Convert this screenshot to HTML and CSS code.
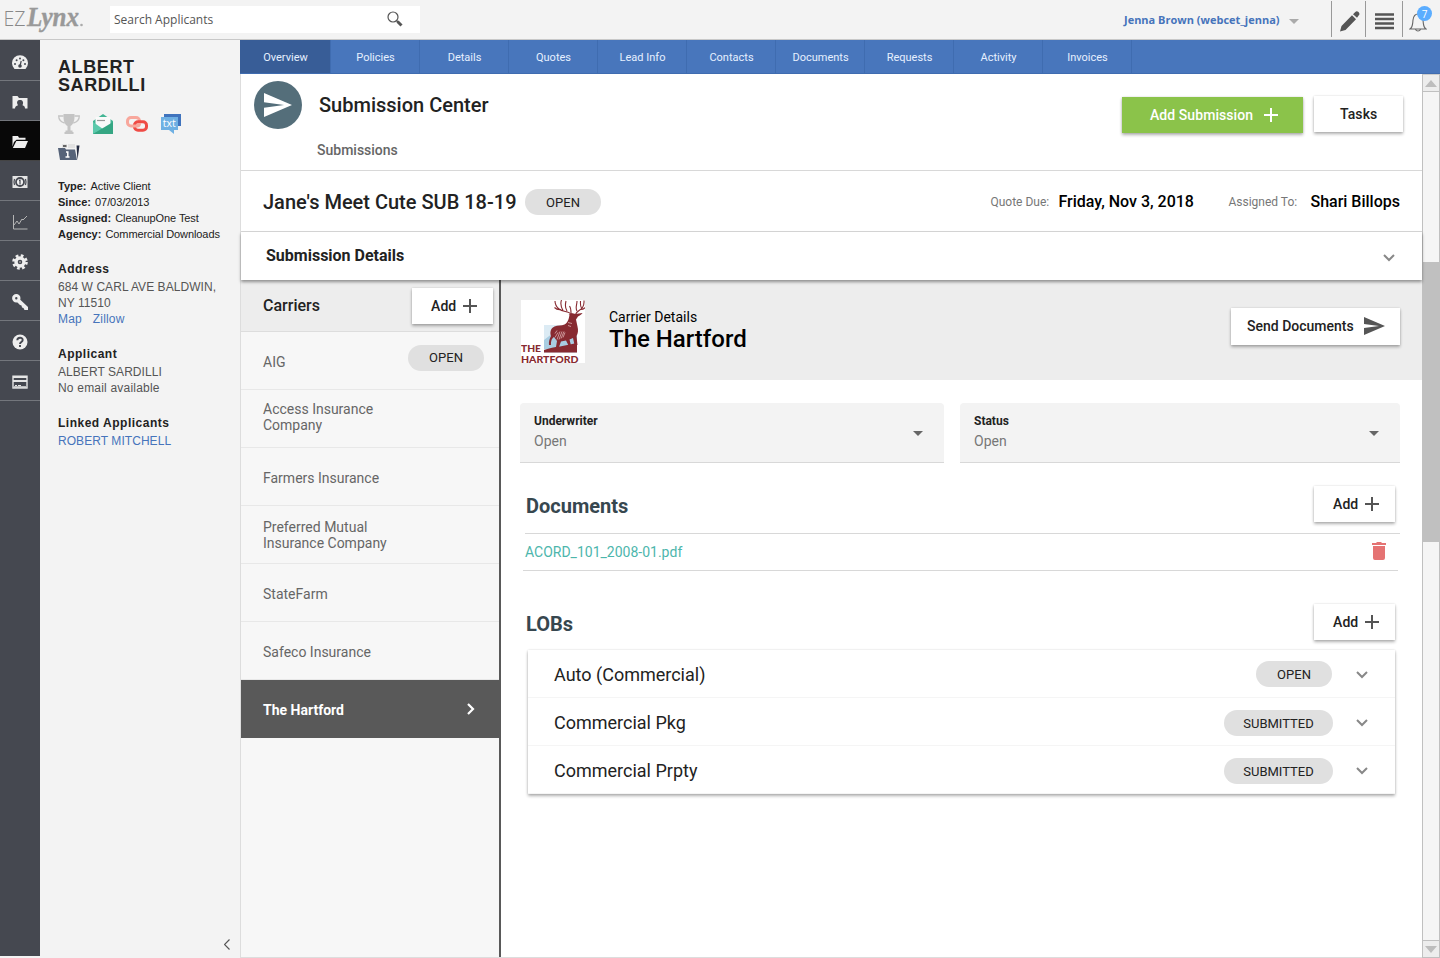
FILE: index.html
```html
<!DOCTYPE html>
<html lang="en">
<head>
<meta charset="utf-8">
<title>EZLynx - Submission Center</title>
<link rel="stylesheet" href="styles.css">
</head>
<body>
<svg class="defs" width="0" height="0">
  <symbol id="plus" viewBox="0 0 14 14"><path d="M7 0v14M0 7h14" stroke="currentColor" stroke-width="2" fill="none"/></symbol>
  <symbol id="down" viewBox="0 0 12 8"><path d="M1 1l5 5 5-5" stroke="currentColor" stroke-width="2" fill="none"/></symbol>
  <symbol id="send" viewBox="0 0 21 18"><path d="M0 0l21 9-21 9v-7l15-2-15-2z" fill="currentColor"/></symbol>
</svg>
<header class="topbar">
  <svg class="logo" width="84" height="39" viewBox="0 0 84 39">
    <text x="3.500" y="26" class="logo-ez" textLength="22" lengthAdjust="spacingAndGlyphs">EZ</text>
    <text x="27" y="26" class="logo-lynx" textLength="52" lengthAdjust="spacingAndGlyphs">Lynx</text>
    <circle cx="81.500" cy="25" r="1.300" fill="#aaa"/>
  </svg>
  <div class="search"><span>Search Applicants</span>
    <svg width="16" height="16" viewBox="0 0 16 16"><circle cx="6" cy="6" r="5" fill="none" stroke="#555" stroke-width="1.200"/><path d="M9.500 9.500l1.500 1.500" stroke="#555" stroke-width="1.500"/><path d="M10.500 10.500l4 4" stroke="#555" stroke-width="3"/></svg>
  </div>
  <div class="user">Jenna Brown (webcet_jenna)</div>
  <svg class="caret" width="10" height="5"><path d="M0 0h10l-5 5z" fill="#aaa"/></svg>
  <div class="tools">
    <div class="tool tool-edit"><svg width="20" height="21" viewBox="0 0 20 21"><path d="M0 20.500l1.500-5.500L12 4.200l4 4L5.500 19z M13 3.200l2.300-2.300c1-1 2-1 3.200.2s1.200 2.200.3 3.200L17 6.800z" fill="#555"/></svg></div>
    <div class="tool tool-menu"><svg width="19" height="17"><path d="M0 1.500h19M0 6h19M0 10.500h19M0 15h19" stroke="#555" stroke-width="2.500"/></svg></div>
    <div class="tool tool-bell"><svg width="18" height="21" viewBox="0 0 18 21"><path d="M1 18c3-2 2.500-5 3-9 .5-4 2.500-6 5-6s4.500 2 5 6c.5 4 0 7 3 9zM6.500 18.500c1 2 4 2 5 0" fill="none" stroke="#666" stroke-width="1.100"/></svg><span class="badge">7</span></div>
  </div>
</header>
<div class="body">
  <nav class="rail">
    <div class="rail-item"><svg width="16" height="16" viewBox="0 0 16 16"><path d="M2.500 14A8 8 0 1 1 13.500 14z" fill="#eee"/><g fill="#454850"><circle cx="3" cy="9" r="1"/><circle cx="4.600" cy="5.200" r="1"/><circle cx="8" cy="3.400" r="1"/><circle cx="11.400" cy="5.200" r="1"/><circle cx="13" cy="9" r="1"/><circle cx="8" cy="11" r="1.800"/></g><path d="M8 11l1.200-5" stroke="#454850" stroke-width="1.200"/></svg></div>
    <div class="rail-item"><svg width="16" height="16" viewBox="0 0 16 16"><path d="M.5 2h5l1.500 2h8.500v10.500h-2.500c0-2-1-2.600-2.500-3.200C12 8 10.500 6 8 6S4 8 6 11.300C4.500 12 3 12.500 3 14.500H.5z" fill="#eee"/></svg></div>
    <div class="rail-item active"><svg width="16" height="16" viewBox="0 0 16 16"><path d="M.5 12.500V2h5.500l1 1.800H13.500v2H4.500L2 8z" fill="#eee"/><path d="M.8 14l3.500-7H16l-3 7z" fill="#eee"/></svg></div>
    <div class="rail-item"><svg width="16" height="16" viewBox="0 0 16 16"><path d="M.5 2h15v12H.5z" fill="#e5e5e5"/><circle cx="8" cy="8" r="4" fill="#eee" stroke="#454850" stroke-width="1.800"/><path d="M2.500 5q-1 3 0 6M13.500 5q1 3 0 6M8 5.500v5M7 6.500h1" stroke="#454850" stroke-width="1.200" fill="none"/></svg></div>
    <div class="rail-item"><svg width="16" height="16" viewBox="0 0 16 16"><path d="M1.500 1v14H15.500M2 11l3-4 2 3 3-5 1 1 4-4" fill="none" stroke="#b5b5b5"/></svg></div>
    <div class="rail-item"><svg width="16" height="16" viewBox="0 0 16 16"><circle cx="8" cy="8" r="4" fill="none" stroke="#eee" stroke-width="3.400"/><circle cx="8" cy="8" r="6.500" fill="none" stroke="#eee" stroke-width="2.600" stroke-dasharray="2.700 2.405"/><circle cx="8" cy="8" r="1" fill="#999"/></svg></div>
    <div class="rail-item"><svg width="16" height="16" viewBox="0 0 16 16"><circle cx="4.300" cy="4.300" r="2.700" fill="none" stroke="#eee" stroke-width="3"/><path d="M7.500 5l8.500 8v3h-3.500l-1-2-1.500-.5-.5-2-1.500-.5L5 8z" fill="#eee"/></svg></div>
    <div class="rail-item"><svg width="16" height="16" viewBox="0 0 16 16"><circle cx="8" cy="8" r="7.500" fill="#eee"/><path d="M5.300 6.300C5.300 3 10.700 3 10.700 6c0 2-2.700 2-2.700 4M8 11v2" fill="none" stroke="#454850" stroke-width="1.900"/></svg></div>
    <div class="rail-item"><svg width="16" height="16" viewBox="0 0 16 16"><rect x="1" y="2.200" width="14" height="11.800" fill="#454850" stroke="#e5e5e5" stroke-width="1.400"/><path d="M1 3h14M1 7h14" stroke="#e5e5e5" stroke-width="2.200"/><path d="M2 13h12" stroke="#e5e5e5" stroke-width="1.500"/><path d="M3 11.500h2M6 11.500h3" stroke="#e5e5e5"/></svg></div>
  </nav>
  <aside class="client">
    <h1>ALBERT<br>SARDILLI</h1>
    <div class="client-icons">
      <svg width="22" height="20" viewBox="0 0 22 20"><path d="M5.500 0h11v3c0 5-2 8-4 9v4.500h2V18h1v2h-9v-2h1v-1.500h2V12c-2-1-4-4-4-9z" fill="#c4c4c4"/><path d="M5.500 2H.7c0 4 2 6 6 7M16.500 2h4.800c0 4-2 6-6 7" fill="none" stroke="#c4c4c4" stroke-width="1.300"/></svg>
      <svg width="20" height="20" viewBox="0 0 20 20"><path d="M0 7l10-7 10 7v13H0z" fill="#43b594"/><path d="M2.500 3h15v8l-7.500 5-7.500-5z" fill="#fafafa"/><path d="M4 6.500h8" stroke="#999" stroke-width="1.200"/><path d="M0 8l10 7L0 20z" fill="#5cc9ab"/><path d="M20 8v12H0z" fill="#35a683"/></svg>
      <svg width="22" height="16" viewBox="0 0 22 16"><rect x="1.500" y="1.500" width="12" height="8.500" rx="3.500" fill="none" stroke="#f8a79c" stroke-width="3"/><rect x="8.500" y="5.800" width="12" height="8.500" rx="3.500" fill="none" stroke="#ef4b45" stroke-width="3"/><path d="M7 10h4q2.500 0 2.500-3" fill="none" stroke="#f8a79c" stroke-width="3"/></svg>
      <svg width="20" height="20" viewBox="0 0 20 20"><path d="M3 0h17v12H3z" fill="#3f73bd"/><path d="M0 3h17v13h-4v4l-5-4H0z" fill="#6eb0e3"/><text x="1.800" y="12.500" class="txt" textLength="13" lengthAdjust="spacingAndGlyphs">txt</text></svg>
      <svg width="22" height="16" viewBox="0 0 22 16"><path d="M4 0h5v4H4zM10 0h7v4h-7z" fill="#e2e2e2"/><path d="M5 1h3.500v2H5z" fill="#666"/><path d="M0 4h7l1 1.500h9L19 16H2z" fill="#566379"/><path d="M18.500 1.500h3L19.500 16z" fill="#252c42"/><path d="M8 8h1.800v5M7.500 13h4" stroke="#fff" stroke-width="1.500" fill="none"/></svg>
    </div>
    <div class="facts">
      <p><b>Type:</b> <span>Active Client</span></p>
      <p><b>Since:</b> <span>07/03/2013</span></p>
      <p><b>Assigned:</b> <span>CleanupOne Test</span></p>
      <p><b>Agency:</b> <span>Commercial Downloads</span></p>
    </div>
    <section><h2>Address</h2><p>684 W CARL AVE BALDWIN,</p><p>NY 11510</p><p class="links"><a>Map</a><a>Zillow</a></p></section>
    <section><h2>Applicant</h2><p>ALBERT SARDILLI</p><p class="loose">No email available</p></section>
    <section><h2>Linked Applicants</h2><p><a>ROBERT MITCHELL</a></p></section>
    <svg class="collapse" width="6" height="11"><path d="M5.500 .5l-5 5 5 5" fill="none" stroke="#555" stroke-width="1.200"/></svg>
  </aside>
  <main class="main">
    <nav class="tabs">
      <div class="tab on">Overview</div><div class="tab">Policies</div><div class="tab">Details</div><div class="tab">Quotes</div><div class="tab">Lead Info</div><div class="tab">Contacts</div><div class="tab">Documents</div><div class="tab">Requests</div><div class="tab">Activity</div><div class="tab">Invoices</div>
    </nav>
    <div class="frame">
      <div class="page">
        <div class="page-head">
          <div class="disc"><svg width="28" height="24"><use href="#send"/></svg></div>
          <div class="titles"><div class="title">Submission Center</div><div class="subtitle">Submissions</div></div>
          <div class="btn btn-green"><span>Add Submission</span><svg width="14" height="14"><use href="#plus"/></svg></div>
          <div class="btn btn-tasks">Tasks</div>
        </div>
        <div class="sub-head">
          <div class="sub-name">Jane's Meet Cute SUB 18-19</div><div class="pill">OPEN</div>
          <div class="meta due">Quote Due:</div><div class="val">Friday, Nov 3, 2018</div>
          <div class="meta assigned">Assigned To:</div><div class="val val-name">Shari Billops</div>
        </div>
        <div class="details-bar"><span>Submission Details</span><svg width="12" height="8"><use href="#down"/></svg></div>
        <div class="cols">
          <div class="carriers">
            <div class="carriers-head"><span>Carriers</span><div class="btn btn-add"><span>Add</span><svg width="14" height="14"><use href="#plus"/></svg></div></div>
            <div class="carrier"><span class="aig">AIG</span><div class="pill">OPEN</div></div>
            <div class="carrier two"><span>Access Insurance<br>Company</span></div>
            <div class="carrier"><span>Farmers Insurance</span></div>
            <div class="carrier two"><span>Preferred Mutual<br>Insurance Company</span></div>
            <div class="carrier"><span>StateFarm</span></div>
            <div class="carrier"><span>Safeco Insurance</span></div>
            <div class="carrier picked"><span>The Hartford</span><svg width="8" height="12"><path d="M1 1l5 5-5 5" fill="none" stroke="#fff" stroke-width="2.200"/></svg></div>
          </div>
          <div class="detail">
            <div class="detail-head">
              <svg class="hartford" width="64" height="63" viewBox="0 0 64 63">
                <rect width="64" height="63" fill="#fff"/>
                <path d="M23 25h33v28H23z" fill="#dcebf4"/><path d="M23 40l9-7 8 5 16-9v20H23z" fill="#a9cde2"/>
                <g fill="#872a31"><path d="M23 50c6-2 10-3 16-3.500L56 43v9.500H23z"/>
                <path d="M47.500 14.500l3-1.500 4 1 7-1c0 1-3 2.500-4.500 3.500L55 19.500l1.500 7c1 4 .5 7-1 9.500l1 9h-3l-1.500-7-3.500 1.500 1.500 6h-2.500l-2.500-5-5 1-2 5.500h-3l1-6-3-4c-3 2-3 5-3 8h-2c-.5-3 .5-6 2-9-1.500-4 0-8 3.500-9.500 3-1.300 7-.5 10-2 3.500-2 4.500-6 5-10z"/></g>
                <path d="M50 14.500c-2-4-8-2-12-5.500-3-2.500-4-5-4-8M40 9.500c-3 .5-5-.5-6.500-2M42 10.500C40 7 39 4 40.500 0M46 11c-2-3-2-6-1-10M54.500 14.500c1.500-4 5-4 7-7s1.500-5 1.500-7M59.500 9.500c2 0 3.500-.5 4.500-2M56 11c-2-3 0-6 0-10M60.500 8c-1.500-2-1-4.500-1-7M50 13c0-3 0-5-1.500-7" fill="none" stroke="#872a31" stroke-width="1.100"/>
                <path d="M34 33.500l2-3m-2 7l3-5m-1 7l3-8m-1 8l3-8m-1 7l3-7m-1 6l2-5m3-10l4 1m-4 2l3 1" stroke="#dbaeb0" stroke-width=".8"/>
                <text x="0" y="52" class="hart" textLength="20" lengthAdjust="spacingAndGlyphs">THE</text><text x="0" y="62.500" class="hart" textLength="57.500" lengthAdjust="spacingAndGlyphs">HARTFORD</text>
              </svg>
              <div class="carrier-title"><div class="small">Carrier Details</div><div class="big">The Hartford</div></div>
              <div class="btn btn-send"><span>Send Documents</span><svg width="21" height="18"><use href="#send"/></svg></div>
            </div>
            <div class="fields">
              <div class="field field-uw"><div><b>Underwriter</b><p>Open</p></div><svg width="10" height="5"><path d="M0 0h10l-5 5z" fill="#666"/></svg></div>
              <div class="field field-st"><div><b>Status</b><p>Open</p></div><svg width="10" height="5"><path d="M0 0h10l-5 5z" fill="#666"/></svg></div>
            </div>
            <div class="section-head"><h3>Documents</h3><div class="btn btn-add"><span>Add</span><svg width="14" height="14"><use href="#plus"/></svg></div></div>
            <div class="doc-rule"></div>
            <div class="doc"><a>ACORD_101_2008-01.pdf</a><svg width="14" height="18"><path d="M0 1h4l1-1h4l1 1h4v2H0zM1 4h12v12q0 2-2 2H3q-2 0-2-2z" fill="#e57373"/></svg></div>
            <div class="section-head lob-head"><h3>LOBs</h3><div class="btn btn-add"><span>Add</span><svg width="14" height="14"><use href="#plus"/></svg></div></div>
            <div class="lobs">
              <div class="lob"><span>Auto (Commercial)</span><div class="pill">OPEN</div><svg width="12" height="8"><use href="#down"/></svg></div>
              <div class="lob"><span>Commercial Pkg</span><div class="pill wide">SUBMITTED</div><svg width="12" height="8"><use href="#down"/></svg></div>
              <div class="lob"><span>Commercial Prpty</span><div class="pill wide">SUBMITTED</div><svg width="12" height="8"><use href="#down"/></svg></div>
            </div>
          </div>
        </div>
      </div>
      <div class="scroll">
        <div class="arrow"><svg width="12" height="7"><path d="M0 7h12L6 0z" fill="#bdbdbd"/></svg></div>
        <div class="thumb"></div>
        <div class="arrow arrow-down"><svg width="12" height="7"><path d="M0 0h12L6 7z" fill="#bdbdbd"/></svg></div>
      </div>
    </div>
  </main>
</div>
</body>
</html>
```
FILE: styles.css
```css
* { box-sizing: border-box; }
body { margin: 0; width: 1440px; height: 958px; overflow: hidden; background: #f3f3f3; font-family: Roboto, sans-serif; color: #222; display: flex; flex-direction: column; }
p, h1, h2, h3 { margin: 0; }
svg { display: block; flex: none; }
.defs { display: none; }

.topbar { height: 40px; flex: none; border-bottom: 1px solid #c8c8c8; display: flex; align-items: flex-start; }
.logo { margin-right: 26px; }
.logo-ez { font: 300 19.500px "Open Sans", sans-serif; fill: #888; }
.logo-lynx { font: italic 700 27px "Liberation Serif", serif; fill: #999; stroke: #999; stroke-width: .4px; }
.search { width: 310px; height: 27px; margin-top: 6px; padding: 0 17px 0 4px; background: #fff; display: flex; align-items: center; justify-content: space-between; font: 12px "Open Sans", sans-serif; color: #555; }
.search svg { margin-top: -2px; }
.user { margin-left: auto; font: 700 11px/40px "Open Sans", sans-serif; color: #4674bb; white-space: nowrap; width: 156px; }
.caret { margin: 19px 32px 0 9px; }
.tools { display: flex; height: 37px; }
.tool { width: 34px; border-left: 1px solid #999; display: flex; align-items: center; justify-content: center; padding-top: 3px; margin-top: 1px; }
.tool-edit { padding-left: 3px; padding-top: 5px; }
.tool-menu { width: 37px; padding-top: 5px; }
.tool-bell { position: relative; width: 38px; padding: 4px 7px 0 0; }
.badge { position: absolute; left: 14px; top: 5px; width: 15px; height: 15px; border-radius: 50%; background: #5badff; color: #fff; font: 10px/16px "Open Sans", sans-serif; text-align: center; }

.body { flex: 1; display: flex; min-height: 0; }
.rail { width: 40px; background: #454850; margin-bottom: 2px; }
.rail-item { height: 40px; border-bottom: 1px solid #73767c; display: flex; align-items: center; justify-content: center; padding-top: 3px; }
.rail-item:first-child { height: 41px; padding-top: 5px; }
.rail-item.active { background: #080808; border-bottom-color: #444; }

.client { width: 200px; padding: 18px 0 0 18px; position: relative; font-family: "Liberation Sans", Arial, sans-serif; }
.client h1 { font-size: 18px; line-height: 18px; letter-spacing: .6px; color: #222; }
.client-icons { display: flex; flex-wrap: wrap; align-items: center; gap: 9px 13px; margin-top: 18px; height: 49px; width: 150px; }
.client-icons svg:nth-child(n+5) { margin-top: -2px; }
.txt { font: 400 10.500px "Open Sans", sans-serif; fill: #fff; }
.facts { margin-top: 17px; font-size: 11px; line-height: 16px; color: #222; white-space: nowrap; }
.facts b { margin-right: 1px; }
.facts span { letter-spacing: -.09px; }
.client section { margin-top: 18px; font-size: 12px; line-height: 16px; color: #555; white-space: nowrap; }
.client section p { letter-spacing: .06px; }
.client section .loose { letter-spacing: .2px; }
.client section .links { letter-spacing: .17px; }
.client h2 { font-size: 12px; line-height: 19px; letter-spacing: .5px; color: #222; }
.client section a { color: #4674bb; }
.links { display: flex; gap: 11px; }
.collapse { position: absolute; left: 184px; bottom: 8px; }

.main { width: 1200px; display: flex; flex-direction: column; }
.tabs { height: 34px; flex: none; background: #4876bc; border-bottom: 1px solid #3f6cb0; display: flex; color: #e6f0ff; font-size: 11px; line-height: 35px; text-align: center; }
.tab { width: 89px; border-right: 1px solid #3f6cb0; padding-left: 1px; }
.tab.on { width: 91px; background: #385d97; }
.frame { flex: 1; display: flex; min-height: 0; }
.page { width: 1182px; background: #fff; border-left: 1px solid #ddd; border-bottom: 1px solid #ddd; display: flex; flex-direction: column; }

.btn { background: #fff; box-shadow: 0 2px 3px rgba(0,0,0,.3), 0 0 2px rgba(0,0,0,.12); font-weight: 500; font-size: 14px; letter-spacing: .1px; display: flex; align-items: center; white-space: nowrap; color: #222; flex: none; }
.btn svg { color: #555; margin-left: auto; }
.btn-green { width: 181px; height: 36px; margin: 23px 11px 0 auto; background: #8bc34a; color: #fff; padding: 0 25px 0 28px; letter-spacing: .07px; }
.btn-green svg { color: #fff; }
.btn-tasks { width: 89px; height: 36px; margin: 22px 19px 0 0; padding-left: 26px; }
.btn-add { width: 81px; height: 36px; padding: 0 16px 0 19px; }

.page-head { height: 97px; flex: none; display: flex; align-items: flex-start; border-bottom: 1px solid #d8d8d8; }
.disc { width: 48px; height: 48px; border-radius: 50%; background: #546e7a; color: #fff; margin: 7px 0 0 13px; display: flex; align-items: center; justify-content: center; }
.titles { margin-left: 17px; }
.title { font-size: 20px; font-weight: 500; line-height: 24px; margin-top: 19px; }
.subtitle { font-size: 14px; font-weight: 500; line-height: 16px; margin: 25px 0 0 -2px; color: #666; }
.sub-head { height: 61px; flex: none; border-bottom: 1px solid #d8d8d8; display: flex; align-items: center; padding: 1px 22px 0 22px; white-space: nowrap; }
.sub-name { font-size: 20px; font-weight: 500; width: 262px; }
.pill { width: 76px; height: 26px; padding-top: 1px; border-radius: 13px; background: #e0e0e0; font-size: 13px; display: flex; align-items: center; justify-content: center; flex: none; color: #222; }
.pill.wide { width: 109px; }
.meta { font-size: 12px; color: #777; }
.due { margin-left: auto; width: 68px; }
.val { font-size: 16px; font-weight: 500; color: #000; width: 170px; }
.assigned { width: 82px; }
.val-name { width: auto; }
.details-bar { height: 48px; flex: none; padding: 0 27px 2px 25px; display: flex; align-items: center; justify-content: space-between; font-size: 16px; font-weight: 700; box-shadow: 0 2px 3px rgba(0,0,0,.4); position: relative; z-index: 1; }
.details-bar svg { color: #888; margin-top: 5px; }

.cols { flex: 1; display: flex; min-height: 0; }
.carriers { width: 260px; background: #f7f7f7; border-right: 2px solid #595959; }
.carriers-head { height: 52px; background: #ededed; border-bottom: 1px solid #ddd; display: flex; justify-content: space-between; align-items: center; padding: 0 6px 0 22px; font-size: 16px; font-weight: 500; }
.carrier { height: 58px; border-bottom: 1px solid #e8e8e8; padding: 3px 15px 0 22px; display: flex; align-items: center; justify-content: space-between; font-size: 14px; line-height: 16px; color: #666; }
.carrier .pill { margin-top: -9px; }
.carrier.two { padding-top: 0; align-items: flex-start; }
.carrier.two span { margin-top: 11px; }
.carrier.two:nth-child(5) span { margin-top: 13px; }
.carrier.picked { background: #595959; color: #fff; font-weight: 700; padding: 2px 24px 0 22px; border-bottom: 0; }
.picked svg { margin-top: -3px; }

.detail { flex: 1; min-width: 0; }
.detail-head { height: 100px; background: #ededed; display: flex; padding: 20px 22px 0 20px; }
.hart { font: 900 9px Lato, sans-serif; fill: #872a31; }
.carrier-title { margin-left: 24px; color: #000; }
.small { font-size: 14px; line-height: 16px; margin-top: 9px; }
.big { font-size: 24px; line-height: 28px; font-weight: 500; }
.btn-send { width: 169px; height: 37px; margin: 8px 0 0 auto; padding: 0 15px 1px 16px; letter-spacing: 0; }
.fields { display: flex; gap: 16px; padding: 23px 22px 0 19px; }
.field { height: 60px; background: #f3f3f3; border-bottom: 1px solid #d8d8d8; border-radius: 4px 4px 0 0; padding: 10px 21px 0 14px; display: flex; justify-content: space-between; }
.field-uw { width: 424px; }
.field-st { width: 440px; }
.field b { display: block; font-size: 12px; line-height: 16px; }
.field p { font-size: 14px; line-height: 16px; margin-top: 4px; color: #777; }
.field svg { margin-top: 18px; }
.section-head { display: flex; justify-content: space-between; padding: 23px 27px 0 25px; height: 70px; }
.section-head h3 { font-size: 20px; line-height: 24px; margin-top: 8px; color: #37474f; }
.doc-rule { height: 1px; background: #d8d8d8; margin: 0 22px 0 24px; }
.doc { height: 37px; margin: 0 24px 0 22px; border-bottom: 1px solid #d8d8d8; display: flex; align-items: center; justify-content: space-between; padding: 0 12px 0 2px; }
.doc a { font-size: 14px; color: #4db6ac; }
.doc svg { margin-top: -3px; }
.lob-head { height: 79px; padding-top: 33px; }
.lobs { margin: 0 27px; box-shadow: 0 2px 3px rgba(0,0,0,.3), 0 0 2px rgba(0,0,0,.12); }
.lob { height: 48px; border-bottom: 1px solid #f5f5f5; display: flex; align-items: center; padding: 2px 27px 0 26px; font-size: 18px; }
.lob span { margin-right: auto; }
.lob .pill { margin: -2px 24px 0 0; }
.lob .pill.wide { margin: 0 23px 0 0; }
.lob svg { color: #888; margin-top: 1px; }

.scroll { width: 18px; border: 1px solid #c0c0c0; border-top-color: #ccc; background: #f5f5f5; display: flex; flex-direction: column; }
.arrow { height: 17px; border-bottom: 1px solid #c0c0c0; display: flex; align-items: center; justify-content: center; background: #ededed; }
.thumb { height: 280px; background: #c0c0c0; margin: 170px -1px 0; }
.arrow-down { margin-top: auto; border-top: 1px solid #c0c0c0; border-bottom: 0; }
```
